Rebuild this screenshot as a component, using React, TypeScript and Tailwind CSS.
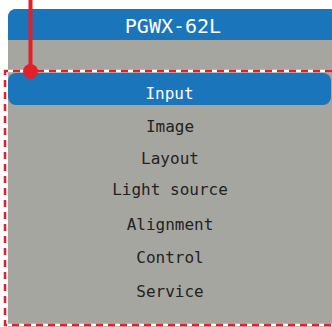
import React from "react";

const items = [
  { label: "Image", mt: "mt-[12px]" },
  { label: "Layout", mt: "mt-[12px]" },
  { label: "Light source", mt: "mt-[11px]" },
  { label: "Alignment", mt: "mt-[15px]" },
  { label: "Control", mt: "mt-[13px]" },
  { label: "Service", mt: "mt-[14px]" },
];

export default function App() {
  return (
    <div
      className="relative w-[332px] h-[327px] bg-white overflow-hidden"
      style={{ fontFamily: '"DejaVu Sans Mono", "Liberation Mono", monospace' }}
    >
      <div className="ml-[8px] mt-[9px] w-[330px] h-[330px] bg-[#a6a6a1] rounded-t-[8px] flex flex-col">
        <div className="h-[31px] bg-[#1b75bb] rounded-t-[8px] flex items-center justify-center pt-[3px] text-white text-[20px] leading-[24px]">
          PGWX-62L
        </div>
        <div className="h-[33px]" />
        <div className="h-[32px] w-[323px] bg-[#1b75bb] rounded-[8px] flex items-center justify-center pt-[10px] text-white text-[16px] leading-[20px]">
          Input
        </div>
        {items.map((it) => (
          <div
            key={it.label}
            className={`${it.mt} h-[20px] w-[324px] flex items-center justify-center text-[#222222] text-[16px] leading-[20px]`}
          >
            {it.label}
          </div>
        ))}
      </div>
      <svg className="absolute left-0 top-0" width="332" height="327" viewBox="0 0 332 327">
        <path d="M 332 71 H 5 V 325 H 332" fill="none" stroke="#ffffff" strokeWidth="2.5" />
        <path
          d="M 332 71 H 5 V 325 H 332"
          fill="none"
          stroke="#e3202a"
          strokeWidth="2.5"
          strokeDasharray="7 5"
        />
        <rect x="28.5" y="0" width="4" height="71" fill="#e3202a" />
        <circle cx="30.5" cy="71.5" r="7.5" fill="#e3202a" />
      </svg>
    </div>
  );
}
